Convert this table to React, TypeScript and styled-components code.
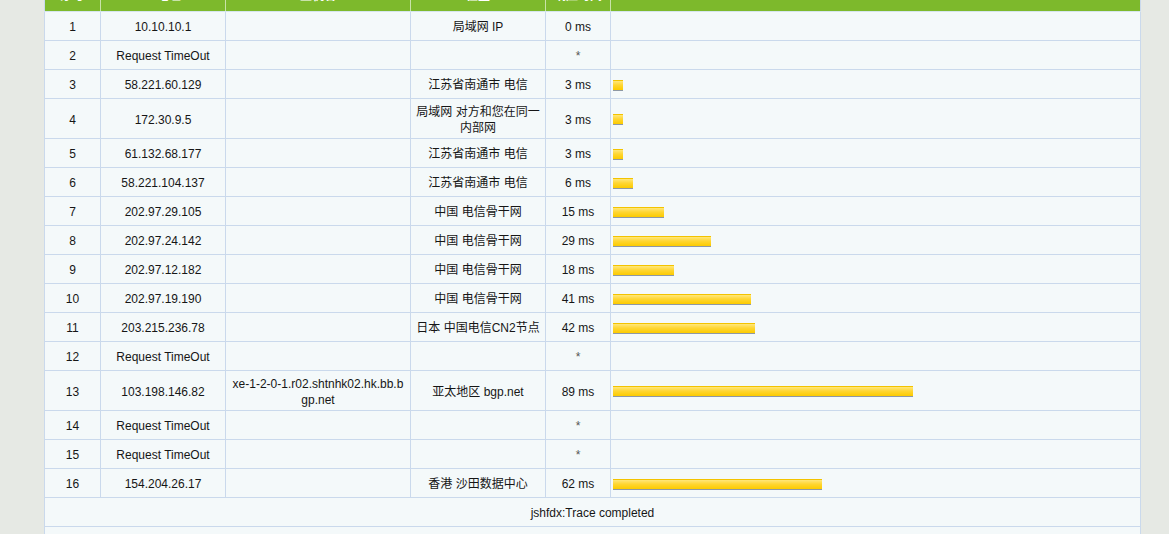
import React from "react";
import styled, { createGlobalStyle } from "styled-components";

const GlobalStyle = createGlobalStyle`
  html, body { margin: 0; padding: 0; background: #e6e9e4; }
  body { font-family: "Liberation Sans", "Noto Sans CJK SC", sans-serif; font-size: 12px; color: #161616; overflow: hidden; }
`;

const Page = styled.div`
  padding-left: 44px;
  width: 1097px;
  margin-top: -19px;
`;

const Table = styled.table`
  width: 1097px;
  table-layout: fixed;
  border-collapse: collapse;
  background: #f4f9fa;
  border-left: 1px solid #cad9ec;
  border-right: 1px solid #cad9ec;
`;

const HeadCell = styled.th`
  box-sizing: border-box;
  height: 30px;
  padding: 7px 2px 0;
  background: #7db92c;
  color: #ffffff;
  font-weight: bold;
  font-size: 12px;
  text-align: center;
  vertical-align: top;
  line-height: 16px;
  border-left: 1px solid #c9e3a8;
  border-bottom: 1px solid #d6e6ee;
  &:first-child { border-left: none; }
`;

const Cell = styled.td<{ $left?: boolean; $wrapPad?: boolean }>`
  box-sizing: border-box;
  height: 29px;
  padding: 5px ${(p) => (p.$wrapPad ? "4px" : "2px")} 2px;
  line-height: 16px;
  text-align: ${(p) => (p.$left ? "left" : "center")};
  vertical-align: middle;
  border: 1px solid #cad9ec;
  word-break: break-all;
`;

const Star = styled.span`
  color: #555;
`;

const Bar = styled.div`
  height: 11px;
  box-sizing: border-box;
  border-top: 1px solid #f3c300;
  border-bottom: 1px solid #8e98a4;
  background: linear-gradient(to bottom, #ffe77a 0%, #ffd633 45%, #fccb00 100%);
`;

type Hop = { n: number; ip: string; host?: string; loc?: string; ms?: number };

const hops: Hop[] = [
  { n: 1, ip: "10.10.10.1", loc: "局域网 IP", ms: 0 },
  { n: 2, ip: "Request TimeOut" },
  { n: 3, ip: "58.221.60.129", loc: "江苏省南通市 电信", ms: 3 },
  { n: 4, ip: "172.30.9.5", loc: "局域网 对方和您在同一内部网", ms: 3 },
  { n: 5, ip: "61.132.68.177", loc: "江苏省南通市 电信", ms: 3 },
  { n: 6, ip: "58.221.104.137", loc: "江苏省南通市 电信", ms: 6 },
  { n: 7, ip: "202.97.29.105", loc: "中国 电信骨干网", ms: 15 },
  { n: 8, ip: "202.97.24.142", loc: "中国 电信骨干网", ms: 29 },
  { n: 9, ip: "202.97.12.182", loc: "中国 电信骨干网", ms: 18 },
  { n: 10, ip: "202.97.19.190", loc: "中国 电信骨干网", ms: 41 },
  { n: 11, ip: "203.215.236.78", loc: "日本 中国电信CN2节点", ms: 42 },
  { n: 12, ip: "Request TimeOut" },
  { n: 13, ip: "103.198.146.82", host: "xe-1-2-0-1.r02.shtnhk02.hk.bb.bgp.net", loc: "亚太地区 bgp.net", ms: 89 },
  { n: 14, ip: "Request TimeOut" },
  { n: 15, ip: "Request TimeOut" },
  { n: 16, ip: "154.204.26.17", loc: "香港 沙田数据中心", ms: 62 },
];

export default function App() {
  return (
    <>
      <GlobalStyle />
      <Page>
        <Table>
          <colgroup>
            <col style={{ width: 56 }} />
            <col style={{ width: 125 }} />
            <col style={{ width: 185 }} />
            <col style={{ width: 135 }} />
            <col style={{ width: 65 }} />
            <col />
          </colgroup>
          <thead>
            <tr>
              <HeadCell>序号</HeadCell>
              <HeadCell>IP地址</HeadCell>
              <HeadCell>主机名</HeadCell>
              <HeadCell>位置</HeadCell>
              <HeadCell>响应时间</HeadCell>
              <HeadCell></HeadCell>
            </tr>
          </thead>
          <tbody>
            {hops.map((h) => (
              <tr key={h.n}>
                <Cell>{h.n}</Cell>
                <Cell>{h.ip}</Cell>
                <Cell $wrapPad>{h.host ?? ""}</Cell>
                <Cell>{h.loc ?? ""}</Cell>
                <Cell>{h.ms === undefined ? <Star>*</Star> : `${h.ms} ms`}</Cell>
                <Cell $left>
                  {h.ms ? <Bar style={{ width: Math.round(h.ms * 3.37) }} /> : null}
                </Cell>
              </tr>
            ))}
            <tr>
              <Cell colSpan={6}>jshfdx:Trace completed</Cell>
            </tr>
            <tr>
              <Cell colSpan={6}></Cell>
            </tr>
          </tbody>
        </Table>
      </Page>
    </>
  );
}
